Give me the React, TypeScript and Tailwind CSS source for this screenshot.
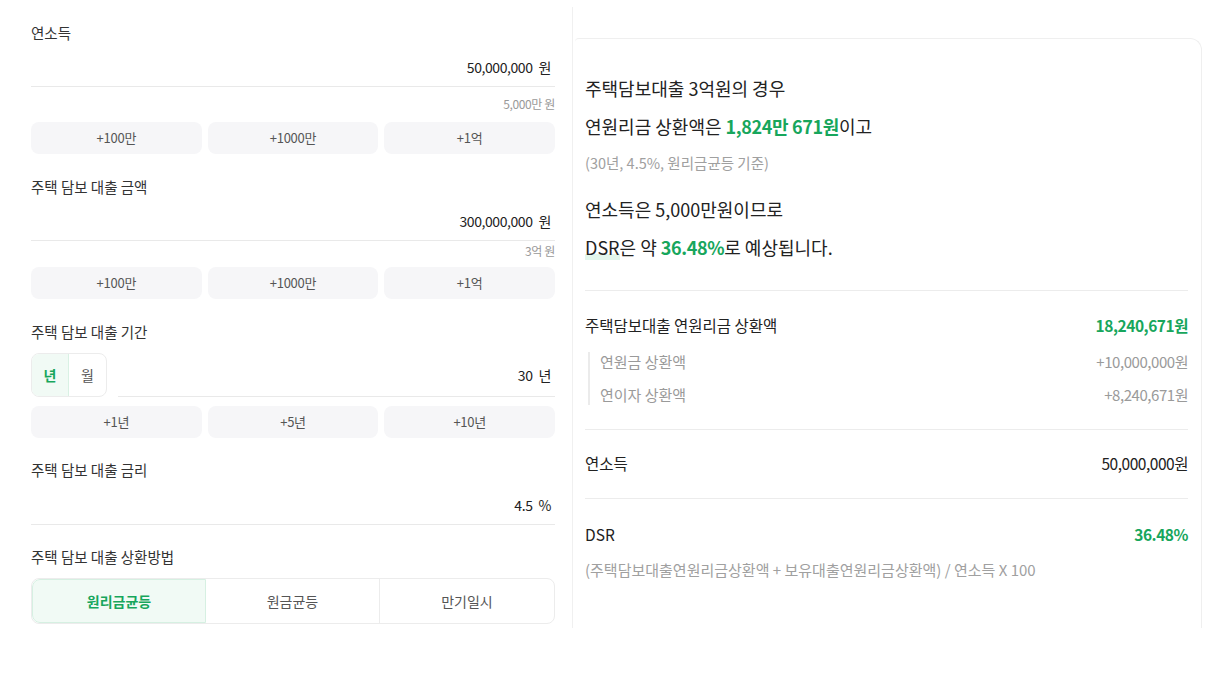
import React from 'react';

const GREEN = 'text-[#17a65c]';

function StepButtons({ items }: { items: string[] }) {
  return (
    <div className="grid grid-cols-3 gap-[6px]">
      {items.map(t => (
        <button key={t} className="h-[32px] rounded-lg bg-[#f6f6f8] text-[13px] tracking-[-0.02em] text-[#555]">
          {t}
        </button>
      ))}
    </div>
  );
}

function Label({ children }: { children: React.ReactNode }) {
  return <div className="h-[20px] leading-[20px] text-[14.5px] text-[#333]">{children}</div>;
}

function ValueRow({ value, unit }: { value: string; unit: string }) {
  return (
    <div className="flex h-[44px] items-center justify-end border-b border-[#e9e9e9] pt-[6px] pr-[4px] text-[14px] tracking-[-0.03em] text-[#222]">
      <span>{value}</span>
      <span className="ml-[6px]">{unit}</span>
    </div>
  );
}

function LeftPanel() {
  return (
    <div className="w-[555px] shrink-0 pl-[31px] pt-[23px]">
      {/* 연소득 */}
      <Label>연소득</Label>
      <ValueRow value="50,000,000" unit="원" />
      <div className="h-[35px] pt-[9px] text-right text-[12px] leading-[16px] tracking-[-0.03em] text-[#999]">5,000만 원</div>
      <StepButtons items={['+100만', '+1000만', '+1억']} />

      {/* 대출 금액 */}
      <div className="mt-[23px]">
        <Label>주택 담보 대출 금액</Label>
        <ValueRow value="300,000,000" unit="원" />
        <div className="h-[26px] pt-[2px] text-right text-[12px] leading-[16px] tracking-[-0.03em] text-[#999]">3억 원</div>
        <StepButtons items={['+100만', '+1000만', '+1억']} />
      </div>

      {/* 대출 기간 */}
      <div className="mt-[23px]">
        <Label>주택 담보 대출 기간</Label>
        <div className="mt-[11px] flex items-end">
          <div className="flex h-[44px] w-[76px] overflow-hidden rounded-lg border border-[#ececec] text-[14px]">
            <div className={`flex w-[37px] items-center justify-center border-r border-[#d9f1e4] bg-[#f1faf5] font-semibold ${GREEN}`}>년</div>
            <div className="flex flex-1 items-center justify-center text-[#555]">월</div>
          </div>
          <div className="ml-[11px] flex h-[44px] flex-1 items-center justify-end border-b border-[#e9e9e9] pt-[2px] pr-[4px] text-[14px] tracking-[-0.03em] text-[#222]">
            <span>30</span>
            <span className="ml-[6px]">년</span>
          </div>
        </div>
        <div className="mt-[9px]">
          <StepButtons items={['+1년', '+5년', '+10년']} />
        </div>
      </div>

      {/* 금리 */}
      <div className="mt-[22px]">
        <Label>주택 담보 대출 금리</Label>
        <div className="h-px" />
        <ValueRow value="4.5" unit="%" />
      </div>

      {/* 상환방법 */}
      <div className="mt-[22px]">
        <Label>주택 담보 대출 상환방법</Label>
        <div className="mt-[11px] grid h-[46px] grid-cols-3 overflow-hidden rounded-lg border border-[#ececec] text-[14px]">
          <div className={`flex items-center justify-center rounded-l-lg border border-[#d6f0e2] bg-[#f1faf5] font-semibold ${GREEN}`}>원리금균등</div>
          <div className="flex items-center justify-center border-r border-[#ececec] text-[#555]">원금균등</div>
          <div className="flex items-center justify-center text-[#555]">만기일시</div>
        </div>
      </div>
    </div>
  );
}

function Row({ label, value, green }: { label: string; value: string; green?: boolean }) {
  return (
    <div className="flex h-[24px] items-center justify-between text-[15.5px] text-[#222]">
      <span>{label}</span>
      <span className={`tracking-[-0.03em] ${green ? `font-semibold ${GREEN}` : ''}`}>{value}</span>
    </div>
  );
}

function RightPanel() {
  return (
    <div className="ml-[17px] mt-[7px] h-[621px] flex-1 border-l border-[#f0f0f0] pl-[2px] pr-[10px]">
      <div className="mt-[31px] h-[590px] rounded-tl-sm rounded-tr-xl border-t border-r border-[#efefef] pl-[10px] pr-[13px] pt-[30px]">
        <div className="text-[18px] leading-[38px] text-[#222]">
          <div>주택담보대출 3억원의 경우</div>
          <div>
            연원리금 상환액은 <span className={`font-semibold tracking-[-0.02em] ${GREEN}`}>1,824만 671원</span>이고
          </div>
        </div>
        <div className="mt-[4px] text-[14.5px] leading-[28px] text-[#a0a0a0]">(30년, 4.5%, 원리금균등 기준)</div>
        <div className="mt-[13px] text-[18px] leading-[38px] text-[#222]">
          <div>연소득은 5,000만원이므로</div>
          <div>
            <span className="bg-[linear-gradient(transparent_78%,#e3f6ec_78%)]">DSR</span>은 약{' '}
            <span className={`font-semibold tracking-[-0.02em] ${GREEN}`}>36.48%</span>로 예상됩니다.
          </div>
        </div>

        <div className="mt-[24px] border-t border-[#ececec] pt-[23px]">
          <Row label="주택담보대출 연원리금 상환액" value="18,240,671원" green />
          <div className="ml-[3px] mt-[14px] flex flex-col gap-[13px] border-l-2 border-[#ebebeb] pl-[10px] text-[15px] text-[#9a9a9a]">
            <div className="flex h-[20px] items-center justify-between">
              <span>연원금 상환액</span>
              <span className="tracking-[-0.03em]">+10,000,000원</span>
            </div>
            <div className="flex h-[20px] items-center justify-between">
              <span>연이자 상환액</span>
              <span className="tracking-[-0.03em]">+8,240,671원</span>
            </div>
          </div>
        </div>

        <div className="mt-[24px] border-t border-[#ececec] pt-[22px]">
          <Row label="연소득" value="50,000,000원" />
        </div>

        <div className="mt-[22px] border-t border-[#ececec] pt-[24px]">
          <Row label="DSR" value="36.48%" green />
          <div className="mt-[13px] text-[15px] leading-[20px] text-[#a0a0a0]">
            (주택담보대출연원리금상환액 + 보유대출연원리금상환액) / 연소득 X 100
          </div>
        </div>
      </div>
    </div>
  );
}

export default function App() {
  return (
    <div className="flex min-h-[676px] w-[1212px] items-start bg-white font-['Noto_Sans_CJK_KR','Noto_Sans',sans-serif]">
      <LeftPanel />
      <RightPanel />
    </div>
  );
}
